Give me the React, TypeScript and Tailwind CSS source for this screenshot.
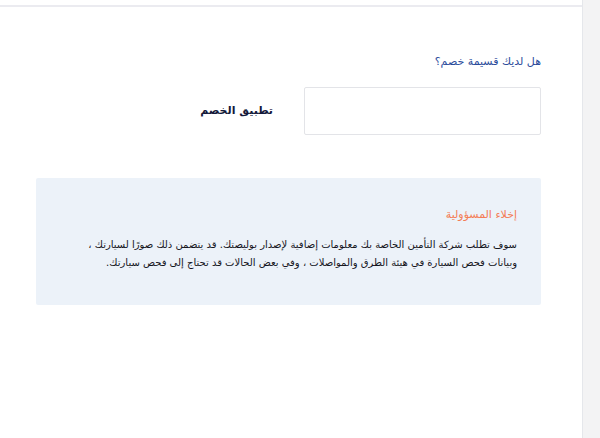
export default function App() {
  return (
    <div
      dir="rtl"
      className="flex h-[438px] w-[600px] overflow-hidden bg-white"
      style={{ fontFamily: '"DejaVu Sans", Tahoma, sans-serif' }}
    >
      {/* side strip */}
      <div className="h-full w-[18px] shrink-0 border-l border-[#e5e7eb] bg-[#f3f3f4]"></div>

      <div className="flex-1">
        <div className="mt-[5px] border-t-2 border-[#ebebf0]"></div>

        <div className="pr-[41px] pl-[36px]">
          <div className="mt-[47px] text-[11px] leading-[16px] text-[#2b4c9b]">هل لديك قسيمة خصم؟</div>

          <div className="mt-[17px] flex items-center">
            <div className="h-[48px] w-[237px] rounded-[2px] border border-[#e3e4e8] bg-white"></div>
            <div className="mr-[31px] text-[11px] font-bold text-[#14193a]">تطبيق الخصم</div>
          </div>

          <div className="mt-[43px] h-[127px] rounded-[2px] bg-[#ecf2f9] pr-[24px] pl-[20px] pt-[30px]">
            <div className="text-[11px] leading-[14px] text-[#f47c55]">إخلاء المسؤولية</div>
            <div className="mt-[14px] text-[10px] leading-[18px] text-[#15151d]">
              سوف تطلب شركة التأمين الخاصة بك معلومات إضافية لإصدار بوليصتك. قد يتضمن ذلك صورًا لسيارتك ،
              <br />
              وبيانات فحص السيارة في هيئة الطرق والمواصلات ، وفي بعض الحالات قد تحتاج إلى فحص سيارتك.
            </div>
          </div>
        </div>
      </div>
    </div>
  )
}
